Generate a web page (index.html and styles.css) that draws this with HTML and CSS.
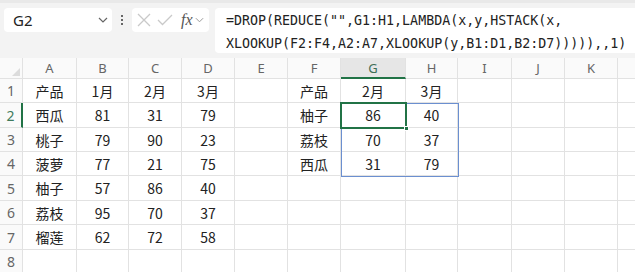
FILE: index.html
```html
<!DOCTYPE html>
<html lang="zh">
  <head>
    <meta charset="UTF-8" />
    <title>Sheet</title>
    <link rel="stylesheet" href="styles.css">
  </head>
  <body>
    <div class="toolbar">
      <div class="namebox">
        <span>G2</span>
        <svg class="chev" width="10" height="6" viewBox="0 0 10 6"><path d="M1 1l4 4 4-4" fill="none" stroke="#666" stroke-width="1.2"/></svg>
      </div>
      <div class="dots"><i></i><i></i><i></i></div>
      <div class="fxbox">
        <svg width="14" height="14" viewBox="0 0 14 14"><path d="M1 1l12 12M13 1L1 13" stroke="#c9c9c9" stroke-width="1.3"/></svg>
        <svg width="16" height="12" viewBox="0 0 16 12"><path d="M1 6l4.5 4.5L15 1" fill="none" stroke="#c9c9c9" stroke-width="1.3"/></svg>
        <span class="fx">fx</span>
        <svg class="chev" width="9" height="6" viewBox="0 0 10 6"><path d="M1 1l4 4 4-4" fill="none" stroke="#999" stroke-width="1.1"/></svg>
      </div>
      <div class="formula">=DROP(REDUCE("",G1:H1,LAMBDA(x,y,HSTACK(x,<br>XLOOKUP(F2:F4,A2:A7,XLOOKUP(y,B1:D1,B2:D7))))),,1)</div>
    </div>

    <div class="sheet" id="sheet">
      <div class="sel-range"></div>
      <div class="sel-cell"><span class="handle"></span></div>
    </div>

    <script>
      // last column is only partly on screen, so its letter stays hidden
      const cols = ["A", "B", "C", "D", "E", "F", "G", "H", "I", "J", "K", ""];
      const rows = [
        ["产品", "1月", "2月", "3月", "", "产品", "2月", "3月"],
        ["西瓜", "81", "31", "79", "", "柚子", "86", "40"],
        ["桃子", "79", "90", "23", "", "荔枝", "70", "37"],
        ["菠萝", "77", "21", "75", "", "西瓜", "31", "79"],
        ["柚子", "57", "86", "40"],
        ["荔枝", "95", "70", "37"],
        ["榴莲", "62", "72", "58"],
        [],
      ];
      const sheet = document.getElementById("sheet");

      function cell(text, cls) {
        const div = document.createElement("div");
        div.className = cls;
        div.textContent = text;
        sheet.appendChild(div);
      }

      cell("", "corner");
      cols.forEach((c) => cell(c, c === "G" ? "colhead active" : "colhead"));
      rows.forEach((row, r) => {
        cell(r + 1, r === 1 ? "rowhead active" : "rowhead");
        cols.forEach((c, i) => cell(row[i] || "", "cell"));
      });
    </script>
  </body>
</html>
```

FILE: styles.css
```css
* {
  box-sizing: border-box;
}
body {
  margin: 0;
  width: 635px;
  height: 272px;
  overflow: hidden;
  background: #fff;
  font-family: "Noto Sans CJK SC", "Noto Sans", sans-serif;
}
.toolbar {
  height: 58px;
  background: #f3f3f3;
  border-top: 3px solid #e9e9e9;
  padding-top: 5px;
  display: flex;
  align-items: flex-start;
}
.namebox {
  margin-left: 4px;
  width: 108px;
  height: 24px;
  background: #fff;
  border-radius: 4px;
  display: flex;
  align-items: center;
  justify-content: space-between;
  padding: 0 4px 0 9px;
  font-family: "Noto Sans", sans-serif;
  font-size: 15px;
  color: #222;
}
.dots {
  width: 20px;
  height: 24px;
  display: flex;
  flex-direction: column;
  align-items: center;
  justify-content: center;
  gap: 2px;
}
.dots i {
  width: 2px;
  height: 2px;
  background: #666;
}
.fxbox {
  width: 77px;
  height: 24px;
  background: #fff;
  border-radius: 4px;
  display: flex;
  align-items: center;
  padding-left: 5px;
  gap: 6px;
}
.fx {
  font-family: "Liberation Serif", serif;
  font-style: italic;
  font-size: 16px;
  color: #555;
  margin-left: 2px;
  margin-right: -4px;
}
.formula {
  margin-left: 6px;
  flex: 1;
  height: 45px;
  background: #fff;
  border-radius: 4px 0 0 4px;
  padding: 1px 0 0 11px;
  font-family: "DejaVu Sans Mono", monospace;
  font-size: 13.3px;
  line-height: 23px;
  color: #222;
  white-space: nowrap;
}
.sheet {
  position: relative;
  display: grid;
  grid-template-columns: 23px 54px 52px 53px 53px 53px 53px 65px 52px 54px 53px 53px 53px;
  grid-template-rows: 21px 24px 25px 24px 24px 25px 24px 25px 24px;
  font-size: 14px;
  color: #222;
}
.sheet > div {
  display: flex;
  align-items: center;
  justify-content: center;
  border-right: 1px solid #e2e2e2;
  border-bottom: 1px solid #e2e2e2;
}
.corner {
  position: relative;
  background: #fafafa;
}
.corner::after {
  content: "";
  position: absolute;
  right: 2px;
  bottom: 2px;
  border-left: 8px solid transparent;
  border-bottom: 8px solid #dcdcdc;
}
.colhead {
  background: #fafafa;
  color: #666;
  font-family: "Noto Sans", sans-serif;
  font-size: 13px;
}
.colhead.active {
  background: #e6e6e6;
  color: #3f6f56;
  border-bottom: 2px solid #217346;
}
.rowhead {
  background: #fafafa;
  color: #666;
  font-family: "Noto Sans", sans-serif;
  font-size: 14px;
}
.rowhead.active {
  color: #3f7a5c;
  border-right: 2px solid #217346;
}
.sheet > .sel-range {
  position: absolute;
  left: 341px;
  top: 45px;
  width: 118px;
  height: 74px;
  border: 1px solid #6b8fd0;
  z-index: 1;
}
.sheet > .sel-cell {
  position: absolute;
  left: 340px;
  top: 44px;
  width: 67px;
  height: 27px;
  border: 2px solid #217346;
  z-index: 2;
}
.handle {
  position: absolute;
  right: -4px;
  bottom: -4px;
  width: 5px;
  height: 5px;
  background: #217346;
  border: 1px solid #fff;
}
```
